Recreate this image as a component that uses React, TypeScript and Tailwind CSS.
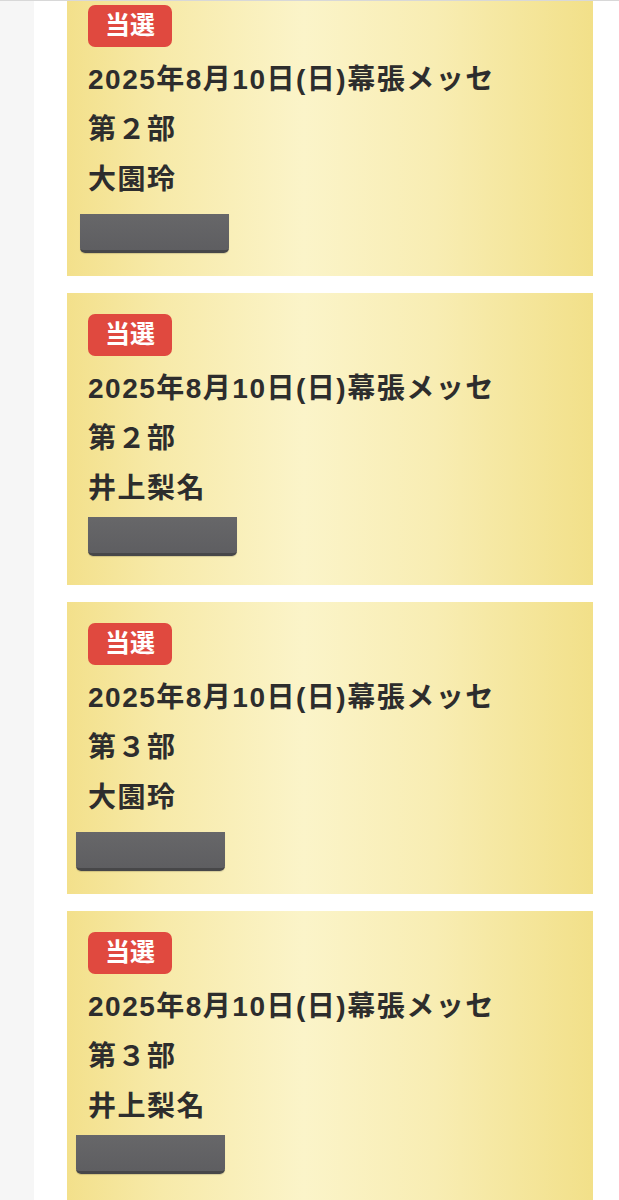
import { FC } from 'react';

interface Entry {
  part: string;
  name: string;
  // redaction box offsets, they move a little from card to card
  boxLeft: string;
  boxTop: string;
}

const entries: Entry[] = [
  { part: '第２部', name: '大園玲', boxLeft: 'ml-[-8px]', boxTop: 'mt-[9px]' },
  { part: '第２部', name: '井上梨名', boxLeft: 'ml-0', boxTop: 'mt-[3px]' },
  { part: '第３部', name: '大園玲', boxLeft: 'ml-[-12px]', boxTop: 'mt-[9px]' },
  { part: '第３部', name: '井上梨名', boxLeft: 'ml-[-12px]', boxTop: 'mt-[3px]' },
];

const font = { fontFamily: '"Liberation Sans", "Noto Sans CJK JP", sans-serif' };

const ResultCard: FC<{ entry: Entry }> = ({ entry }) => {
  return (
    <div className="h-[292px] w-[526px] shrink-0 bg-[linear-gradient(90deg,#f3e08b_0%,#f7eaa9_18%,#fbf4c9_45%,#f8edb3_70%,#f2e089_100%)] pl-[21px] pt-[21px]">
      <div className="flex h-[42px] w-[84px] items-center justify-center rounded-[7px] bg-[#e0493f] text-[25px] font-bold text-white">
        当選
      </div>
      <div className="mt-[8px] flex flex-col text-[28px] font-bold tracking-[1.5px] text-[#2d2d2d]">
        <div className="h-[50px] leading-[50px]">2025年8月10日(日)幕張メッセ</div>
        <div className="h-[50px] leading-[50px]">{entry.part}</div>
        <div className="h-[50px] leading-[50px]">{entry.name}</div>
      </div>
      {/* blacked out area */}
      <div
        className={`${entry.boxLeft} ${entry.boxTop} h-[39px] w-[149px] rounded-b-[5px] border-b-[3px] border-[#474749] bg-[linear-gradient(180deg,#676769_0%,#5e5e61_100%)] shadow-[0_1px_1px_rgba(0,0,0,0.15)]`}
      />
    </div>
  );
};

const App: FC = () => {
  return (
    <div className="flex h-[1200px] w-[619px] overflow-hidden border-t border-[#d8d8d8] bg-white" style={font}>
      <div className="w-[34px] shrink-0 bg-[#f6f6f6]" />
      <div className="flex flex-1 flex-col gap-[17px] pl-[33px] mt-[-17px]">
        {entries.map((entry, i) => (
          <ResultCard key={i} entry={entry} />
        ))}
      </div>
    </div>
  );
};

export default App;
